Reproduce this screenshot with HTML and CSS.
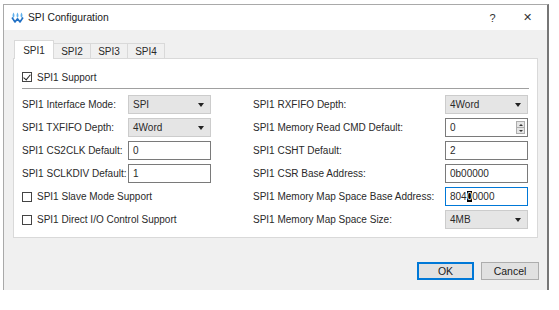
FILE: index.html
```html
<!DOCTYPE html>
<html lang="en">
<head>
    <meta charset="UTF-8">
    <title>SPI Configuration</title>
    <link rel="stylesheet" href="styles.css">
</head>
<body>
    <div class="window">
        <div class="titlebar">
            <svg class="app-icon" width="13" height="11" viewBox="0 0 13 11">
                <path d="M2.5 0.5 C1.2 2.5 1.2 4.5 2.5 6 C3.8 4.5 3.8 2.5 2.5 0.5 Z" fill="#5fb0ec"/>
                <path d="M6.5 0.5 C5.2 2.5 5.2 4.5 6.5 6 C7.8 4.5 7.8 2.5 6.5 0.5 Z" fill="#5fb0ec"/>
                <path d="M10.5 0.5 C9.2 2.5 9.2 4.5 10.5 6 C11.8 4.5 11.8 2.5 10.5 0.5 Z" fill="#5fb0ec"/>
                <path d="M1 5.5 L4 10 L6.5 6.8 L9 10 L12 5.5" fill="none" stroke="#1f6fc4" stroke-width="1.6" stroke-linejoin="round"/>
            </svg>
            <span class="title">SPI Configuration</span>
            <span class="title-btn help">?</span>
            <span class="title-btn close">&#x2715;</span>
        </div>

        <div class="dialog-body">
            <div class="tabs">
                <div class="tab active">SPI1</div>
                <div class="tab">SPI2</div>
                <div class="tab">SPI3</div>
                <div class="tab">SPI4</div>
            </div>

            <div class="panel">
                <label class="check-row">
                    <span class="check checked"></span>SPI1 Support
                </label>
                <div class="separator"></div>

                <div class="columns">
                    <div class="col col-left">
                        <span class="label">SPI1 Interface Mode:</span>
                        <div class="combo">SPI</div>
                        <span class="label">SPI1 TXFIFO Depth:</span>
                        <div class="combo">4Word</div>
                        <span class="label">SPI1 CS2CLK Default:</span>
                        <div class="field">0</div>
                        <span class="label">SPI1 SCLKDIV Default:</span>
                        <div class="field">1</div>
                        <label class="check-row wide">
                            <span class="check"></span>SPI1 Slave Mode Support
                        </label>
                        <label class="check-row wide">
                            <span class="check"></span>SPI1 Direct I/O Control Support
                        </label>
                    </div>

                    <div class="col col-right">
                        <span class="label">SPI1 RXFIFO Depth:</span>
                        <div class="combo">4Word</div>
                        <span class="label">SPI1 Memory Read CMD Default:</span>
                        <div class="field spin">0
                            <span class="spin-btns">
                                <span class="spin-up"></span>
                                <span class="spin-down"></span>
                            </span>
                        </div>
                        <span class="label">SPI1 CSHT Default:</span>
                        <div class="field">2</div>
                        <span class="label">SPI1 CSR Base Address:</span>
                        <div class="field">0b00000</div>
                        <span class="label">SPI1 Memory Map Space Base Address:</span>
                        <div class="field focused">804<span class="caret">0</span>0000</div>
                        <span class="label">SPI1 Memory Map Space Size:</span>
                        <div class="combo">4MB</div>
                    </div>
                </div>
            </div>

            <div class="buttons">
                <button class="btn default">OK</button>
                <button class="btn">Cancel</button>
            </div>
        </div>
    </div>
</body>
</html>
```

FILE: styles.css
```css
* {
    margin: 0;
    padding: 0;
    box-sizing: border-box;
}

body {
    font-family: 'Liberation Sans', Arial, sans-serif;
    font-size: 10px;
    color: #2a2a2a;
    background-color: #ffffff;
}

.window {
    width: 546px;
    height: 286px;
    margin: 4px 0 0 3px;
    border-top: 1px solid #a9a9a9;
    border-left: 1px solid #a9a9a9;
    border-right: 2px solid #767676;
    display: flex;
    flex-direction: column;
}

.titlebar {
    height: 25px;
    background: #ffffff;
    display: flex;
    align-items: center;
    padding-left: 7px;
}

.app-icon {
    margin-right: 4px;
}

.title {
    font-size: 10.3px;
    flex: 1;
    color: #1b1b1b;
}

.title-btn {
    width: 35px;
    text-align: center;
    font-size: 11px;
    color: #333;
}

.help {
    margin-right: 0;
}

.close {
    font-size: 11px;
    margin-right: 2px;
}

.dialog-body {
    flex: 1;
    background: #f0f0f0;
    padding: 10px 8px 10px 9px;
    display: flex;
    flex-direction: column;
}

.tabs {
    display: flex;
    align-items: flex-end;
    height: 18px;
    padding-left: 1px;
}

.tab {
    width: 38px;
    height: 15px;
    border: 1px solid #d9d9d9;
    border-bottom: none;
    margin-left: -1px;
    background: #f0f0f0;
    display: flex;
    align-items: center;
    justify-content: center;
    font-size: 10px;
}

.tab.active {
    width: 40px;
    height: 19px;
    margin-left: 0;
    margin-bottom: -1px;
    background: #ffffff;
    position: relative;
    z-index: 1;
}

.panel {
    height: 180px;
    width: 525px;
    background: #ffffff;
    border: 1px solid #d9d9d9;
    padding: 9px 8px 0 8px;
}

.check-row {
    display: flex;
    align-items: center;
    height: 18px;
}

.check {
    width: 10px;
    height: 10px;
    border: 1px solid #444;
    margin-right: 5px;
    position: relative;
    background: #fff;
}

.check.checked::after {
    content: '';
    position: absolute;
    left: 2px;
    top: 0px;
    width: 3px;
    height: 6px;
    border-right: 1px solid #222;
    border-bottom: 1px solid #222;
    transform: rotate(40deg);
}

.separator {
    height: 1px;
    background: #a0a0a0;
    margin: 2px 0 6px 0;
}

.columns {
    display: flex;
    gap: 42px;
}

.col {
    display: grid;
    grid-auto-rows: 19px;
    row-gap: 4px;
    align-items: center;
}

.col-left {
    grid-template-columns: 106px 83px;
}

.col-right {
    grid-template-columns: 192px 83px;
}

.check-row.wide {
    grid-column: span 2;
    height: 19px;
}

.combo {
    height: 19px;
    background: #e5e5e5;
    border: 1px solid #cccccc;
    padding-left: 4px;
    display: flex;
    align-items: center;
    position: relative;
}

.combo::after {
    content: '';
    position: absolute;
    right: 6px;
    top: 7px;
    border-left: 3.5px solid transparent;
    border-right: 3.5px solid transparent;
    border-top: 4px solid #222;
}

.field {
    height: 19px;
    background: #ffffff;
    border: 1px solid #7a7a7a;
    padding-left: 4px;
    display: flex;
    align-items: center;
    position: relative;
}

.field.focused {
    border-color: #0078d7;
}

.caret {
    background: #000;
    color: #fff;
}

.spin-btns {
    position: absolute;
    right: 2px;
    top: 2px;
    width: 9px;
    height: 13px;
    display: flex;
    flex-direction: column;
    border: 1px solid #adadad;
    background: #e5e5e5;
}

.spin-up, .spin-down {
    flex: 1;
    position: relative;
}

.spin-up {
    border-bottom: 1px solid #adadad;
}

.spin-up::after, .spin-down::after {
    content: '';
    position: absolute;
    left: 1.5px;
    border-left: 2.5px solid transparent;
    border-right: 2.5px solid transparent;
}

.spin-up::after {
    top: 1.5px;
    border-bottom: 2.5px solid #333;
}

.spin-down::after {
    top: 1.5px;
    border-top: 2.5px solid #333;
}

.buttons {
    display: flex;
    justify-content: flex-end;
    gap: 7px;
    margin-top: 24px;
}

.btn {
    width: 58px;
    height: 18px;
    font-family: 'Liberation Sans', Arial, sans-serif;
    font-size: 10.5px;
    color: #1b1b1b;
    background: #e1e1e1;
    border: 1px solid #adadad;
}

.btn.default {
    border: 2px solid #0078d7;
    width: 57px;
}
```
